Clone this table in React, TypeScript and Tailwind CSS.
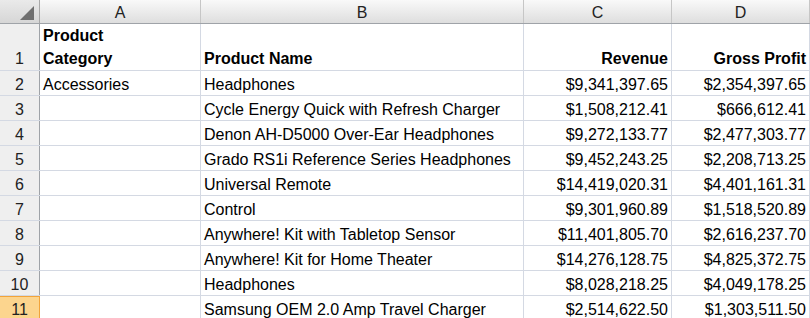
const rows: { cat?: string; name: string; rev: string; gp: string }[] = [
  { cat: 'Accessories', name: 'Headphones', rev: '$9,341,397.65', gp: '$2,354,397.65' },
  { name: 'Cycle Energy Quick with Refresh Charger', rev: '$1,508,212.41', gp: '$666,612.41' },
  { name: 'Denon AH-D5000 Over-Ear Headphones', rev: '$9,272,133.77', gp: '$2,477,303.77' },
  { name: 'Grado RS1i Reference Series Headphones', rev: '$9,452,243.25', gp: '$2,208,713.25' },
  { name: 'Universal Remote', rev: '$14,419,020.31', gp: '$4,401,161.31' },
  { name: 'Control', rev: '$9,301,960.89', gp: '$1,518,520.89' },
  { name: 'Anywhere! Kit with Tabletop Sensor', rev: '$11,401,805.70', gp: '$2,616,237.70' },
  { name: 'Anywhere! Kit for Home Theater', rev: '$14,276,128.75', gp: '$4,825,372.75' },
  { name: 'Headphones', rev: '$8,028,218.25', gp: '$4,049,178.25' },
  { name: 'Samsung OEM 2.0 Amp Travel Charger', rev: '$2,514,622.50', gp: '$1,303,511.50' },
];

const colHead =
  'h-full flex items-center justify-center pt-[2px] border-r border-[#c6c6c6] text-[#222] text-[16px]';
const cell = 'h-full flex items-end border-r border-[#d4d9e3] px-[3px]';
const rowHead =
  'w-[40px] shrink-0 h-full flex items-end justify-center bg-[#efefef] border-r border-[#9fa3a8] text-[#222]';

export default function App() {
  return (
    <div
      className="w-[810px] h-[318px] overflow-hidden bg-white text-black text-[16px] leading-[21px]"
      style={{ fontFamily: '"Liberation Sans", Arial, sans-serif' }}
    >
      {/* column header */}
      <div className="flex h-[24px] border-b border-[#9fa3a8] bg-gradient-to-b from-[#f9f9f9] to-[#dedede]">
        <div className="relative w-[40px] shrink-0 h-full border-r border-[#a8a8a8] bg-gradient-to-b from-[#eaeaea] to-[#d6d6d6]">
          <div className="absolute right-[5px] bottom-[3px] w-0 h-0 border-l-[14px] border-l-transparent border-b-[14px] border-b-[#6f6f6f]" />
        </div>
        <div className={`w-[161px] shrink-0 ${colHead}`}>A</div>
        <div className={`w-[323px] shrink-0 ${colHead}`}>B</div>
        <div className={`w-[148px] shrink-0 ${colHead}`}>C</div>
        <div className={`w-[138px] shrink-0 ${colHead} border-[#a8a8a8]`}>D</div>
      </div>

      {/* row 1: headings */}
      <div className="flex h-[47px] border-b border-[#d4d9e3] leading-[23px]">
        <div className={rowHead}>1</div>
        <div className={`w-[161px] shrink-0 ${cell} font-bold`}>
          <span>
            Product
            <br />
            Category
          </span>
        </div>
        <div className={`w-[323px] shrink-0 ${cell} font-bold`}>Product Name</div>
        <div className={`w-[148px] shrink-0 ${cell} justify-end font-bold`}>Revenue</div>
        <div className={`w-[138px] shrink-0 ${cell} justify-end font-bold`}>Gross Profit</div>
      </div>

      {rows.map((r, i) => {
        const n = i + 2;
        const selected = n === 11;
        return (
          <div key={n} className="flex h-[25px] border-b border-[#d4d9e3]">
            <div
              className={
                selected
                  ? 'w-[40px] shrink-0 h-full flex items-end justify-center bg-[#fcd58e] border-r border-[#f2a43a] border-t border-t-[#f2a43a] text-[#222]'
                  : rowHead
              }
            >
              {n}
            </div>
            <div className={`w-[161px] shrink-0 ${cell}`}>{r.cat ?? ''}</div>
            <div className={`w-[323px] shrink-0 ${cell} whitespace-nowrap`}>{r.name}</div>
            <div className={`w-[148px] shrink-0 ${cell} justify-end`}>{r.rev}</div>
            <div className={`w-[138px] shrink-0 ${cell} justify-end`}>{r.gp}</div>
          </div>
        );
      })}
    </div>
  );
}
